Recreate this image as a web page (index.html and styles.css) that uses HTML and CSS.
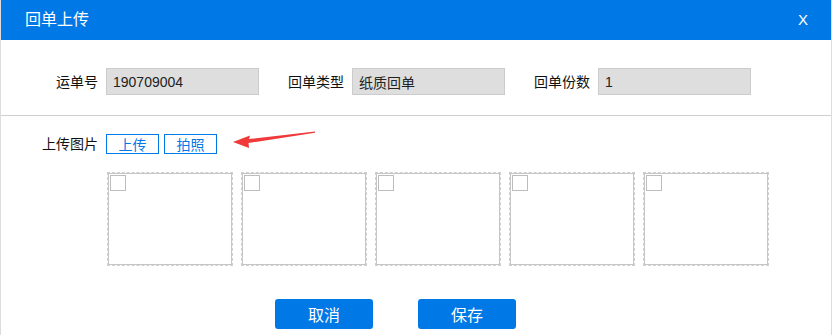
FILE: index.html
```html
<!DOCTYPE html>
<html lang="zh-CN">
<head>
    <meta charset="UTF-8">
    <meta name="viewport" content="width=device-width, initial-scale=1">
    <title>回单上传</title>
    <link rel="stylesheet" href="styles.css">
</head>
<body>

<div class="dialog">
    <div class="dialog-header">
        <span class="dialog-title">回单上传</span>
        <span class="dialog-close">X</span>
    </div>

    <div class="info-row">
        <div class="field">
            <label class="field-label">运单号</label>
            <input class="field-input" type="text" value="190709004" readonly>
        </div>
        <div class="field">
            <label class="field-label">回单类型</label>
            <input class="field-input" type="text" value="纸质回单" readonly>
        </div>
        <div class="field">
            <label class="field-label">回单份数</label>
            <input class="field-input" type="text" value="1" readonly>
        </div>
    </div>

    <div class="upload-section">
        <div class="upload-row">
            <span class="field-label">上传图片</span>
            <div class="upload-actions">
                <button class="btn-outline">上传</button>
                <button class="btn-outline">拍照</button>
            </div>
            <!-- 红色箭头标注 -->
            <svg class="arrow-mark" width="96" height="26" viewBox="0 0 96 26">
                <polygon points="87,5.5 21,13 22,9.5 5,16 21,22 20.5,17 87,6.8" fill="#f0393b"/>
            </svg>
        </div>

        <div class="photo-list">
            <div class="photo-box"><span class="photo-check"></span></div>
            <div class="photo-box"><span class="photo-check"></span></div>
            <div class="photo-box"><span class="photo-check"></span></div>
            <div class="photo-box"><span class="photo-check"></span></div>
            <div class="photo-box"><span class="photo-check"></span></div>
        </div>

        <div class="dialog-footer">
            <button class="btn-primary">取消</button>
            <button class="btn-primary">保存</button>
        </div>
    </div>
</div>

</body>
</html>
```

FILE: styles.css
```css
body {
    margin: 0;
    font-family: "Liberation Sans", "Noto Sans CJK SC", sans-serif;
    font-size: 14px;
    color: #111;
    background-color: #fff;
}

.dialog {
    width: 832px;
    height: 335px;
    box-sizing: border-box;
    border-left: 1px solid #dcdcdc;
    border-right: 1px solid #dcdcdc;
    overflow: hidden;
}

.dialog-header {
    height: 40px;
    background-color: #0078e6;
    color: #fff;
    display: flex;
    align-items: center;
    justify-content: space-between;
    padding: 0 24px 0 25px;
    margin: 0 -1px;
}

.dialog-title {
    font-size: 16px;
    line-height: 40px;
}

.dialog-close {
    font-size: 15px;
    line-height: 40px;
}

/* 上方信息 */
.info-row {
    display: flex;
    padding: 28px 0 20px 13px;
    border-bottom: 1px solid #cfcfcf;
}

.field {
    display: flex;
    align-items: center;
    width: 246px;
}

.field-label {
    width: 84px;
    text-align: right;
    margin-right: 8px;
    line-height: 20px;
    flex-shrink: 0;
}

.field-input {
    width: 153px;
    height: 27px;
    box-sizing: border-box;
    border: 1px solid #cccccc;
    background-color: #dedede;
    padding: 0 0 0 6px;
    font-family: "Liberation Sans", "Noto Sans CJK SC", sans-serif;
    font-size: 14px;
    color: #222;
    outline: none;
}

/* 上传区域 */
.upload-section {
    padding: 18px 0 0 13px;
}

.upload-row {
    position: relative;
    display: flex;
    align-items: center;
}

.upload-actions {
    display: flex;
    gap: 5px;
}

.btn-outline {
    width: 53px;
    height: 20px;
    box-sizing: border-box;
    padding: 0;
    border: 1px solid #0078e6;
    background-color: #fff;
    color: #0078e6;
    font-family: "Noto Sans CJK SC", sans-serif;
    font-size: 14px;
    line-height: 18px;
    cursor: pointer;
}

.arrow-mark {
    position: absolute;
    left: 214px;
    top: -8px;
}

.photo-list {
    display: flex;
    gap: 10px;
    margin: 19px 0 0 94px;
}

/* 外层虚线 + 内层实线 */
.photo-box {
    width: 124px;
    height: 92px;
    box-sizing: border-box;
    border: 1px solid #c6c6c6;
    outline: 1px dashed #cfcfcf;
    padding: 1px;
}

.photo-check {
    display: block;
    width: 16px;
    height: 16px;
    box-sizing: border-box;
    border: 1px solid #bdbdbd;
}

.dialog-footer {
    display: flex;
    gap: 45px;
    margin: 34px 0 0 261px;
}

.btn-primary {
    width: 98px;
    height: 30px;
    border: none;
    border-radius: 3px;
    background-color: #0078e6;
    color: #fff;
    font-family: "Noto Sans CJK SC", sans-serif;
    font-size: 16px;
    padding: 0;
    cursor: pointer;
}
```
